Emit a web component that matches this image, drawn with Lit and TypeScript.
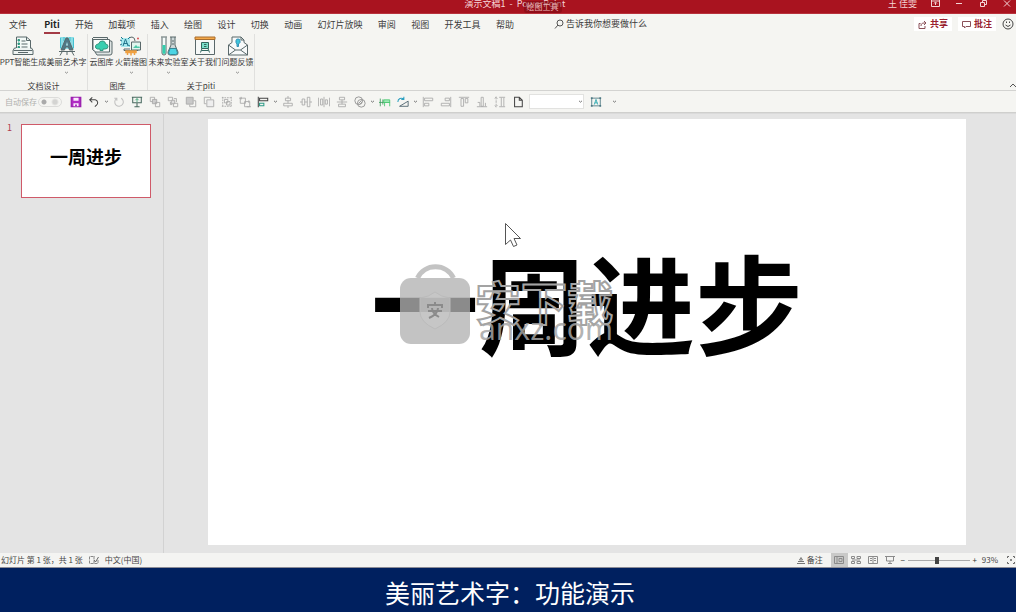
import { LitElement, html, svg, css, nothing, TemplateResult } from "lit";
import { customElement, property } from "lit/decorators.js";

type Shape = ReturnType<typeof svg>;

const icons: Record<string, Shape> = {
  save: svg`<path d="M1.500 1.500h11v11h-11z" fill="#b02bc4" stroke="#9a1fae" stroke-width="1.500"/><path d="M4 2h6v3.500H4zM4 8.500h6V12H4z" fill="#fbeafd" stroke="none"/><path d="M6 10h2v2H6z" fill="#9a1fae" stroke="none"/>`,
  undo: svg`<path d="M5 1.500L2 4.500l3 3M2.500 4.500h6a3.500 3.500 0 0 1 1 6.500L8 12.500" stroke="#444" stroke-width="1.200"/>`,
  redo: svg`<path d="M9.500 2.600A5 5 0 1 1 4 3M1.500 2.500h3v3" stroke="#c0c0c0" stroke-width="1.200"/>`,
  show: svg`<path d="M1 1.500h12M2 1.500v6.500h10V1.500M7 8v4.500M4 12.500h6" stroke="#48695f" stroke-width="1.200"/><path d="M7 3v4M5 5l2-2 2 2" stroke="#379e70"/>`,
  front: svg`<path d="M1.500 1.500h5v5h-5z"/><path d="M4 4h5v5H4z" fill="#ccc"/><path d="M7.500 7.500h5v5h-5z"/>`,
  back: svg`<path d="M1.500 1.500h5v4h-5zM7.500 8.500h5v4h-5z"/><path d="M4 7v3h2M8 3h3v4" /><path d="M5 5h4v4H5z" fill="#ddd"/>`,
  forward: svg`<path d="M1.500 1.500h8v8h-8z" fill="#c9c9c9"/><path d="M10 5.500h2.500v7h-7V10"/>`,
  backward: svg`<path d="M9 4V1.500H1.500V9H4"/><path d="M4.500 4.500h8v8h-8z" fill="#eee"/>`,
  group: svg`<path d="M2 1v12M12 1v12M1 2h12M1 12h12" stroke-dasharray="2 1"/><path d="M4 4h4v4H4zM6.500 6.500h4v4h-4z"/>`,
  ungroup: svg`<path d="M1.500 2.500h6v6h-6zM6.500 6.500h6v6h-6z"/><path d="M0 2.500h3M9 12.500h5M2.500 1v3M11.500 5v3" />`,
  left: svg`<path d="M1.500 1v12M3 2.500h9.500v3H3zM3 8.500h5v3H3z"/>`,
  leftDark: svg`<path d="M1.500 1v12M3 2.500h9.500v3H3z" stroke="#444" stroke-width="1.200"/><path d="M3 8.500h5v3H3z" stroke="#2d9b86" stroke-width="1.200"/>`,
  center: svg`<path d="M7 0v2.500M7 5.500v3M7 11.500V14M4 2.500h6v3H4zM2 8.500h10v3H2z"/>`,
  middle: svg`<path d="M0 7h2.500M5.500 7h3M11.500 7H14M2.500 3.500h3v7h-3zM8.500 1.500h3v11h-3z"/>`,
  distH: svg`<path d="M.5 2v10M13.500 2v10M3 3.500h2.500v7H3zM8.500 4.500H11v5H8.500zM7 1v12"/>`,
  distV: svg`<path d="M1 7h12M4 1.500h6v3H4zM3 9.500h8v3H3zM7 4.500v5"/>`,
  merge: svg`<circle cx="5.500" cy="5.500" r="4.500" stroke="#8c8c8c"/><circle cx="8.500" cy="8.500" r="4.500" stroke="#8c8c8c"/><path d="M5 9l4-4M6.500 10l3-3" stroke="#8c8c8c"/>`,
  green: svg`<path d="M1.500 3v9M4.500 4v6M0 7.500h13" stroke="#3d9c5d"/><path d="M5.500 4.500h7v3h-7zM12.500 8v4M6.500 8v4" stroke="#46c86d" fill="#a8ecbc"/>`,
  angle: svg`<path d="M3 12h10V6L3 12" stroke="#465c68"/><path d="M1 7c0-4 4-5.500 7-3.500M8 1v3H5" stroke="#2b9fc0" stroke-width="1.200"/>`,
  right: svg`<path d="M12.500 1v12M1.500 8.500H11v3H1.500zM6 2.500h5v3H6z"/>`,
  top: svg`<path d="M1 1.500h12M3.500 3h3v9h-3zM8.500 3h3v5h-3z"/>`,
  bottom: svg`<path d="M1 12.500h12M2 7.500h2.500V12M6 1.500h2.500V12H6zM11 8v4"/>`,
  height: svg`<path d="M2.500 1v12M1 3l1.500-2L4 3M1 11l1.500 2L4 11" stroke-dasharray="3 1"/><path d="M6 1.500h7M6 12.500h7M8.500 2v10M11.500 2v10"/>`,
  page: svg`<path d="M3 1.500h5.500L12 5v7.500H3zM8.500 1.500V5H12" stroke="#444" stroke-width="1.200"/>`,
  textbox: svg`<path d="M2 2.500h10v9H2z" stroke="#4c7782"/><path d="M5 10l2-6 2 6M5.600 8h3" stroke="#26a6ad"/><path d="M1 1.500h2v2H1zM11 1.500h2v2h-2zM1 10.500h2v2H1zM11 10.500h2v2h-2z" fill="#4c7782" stroke="none"/>`,
};

const art: Record<string, Shape> = {
  ppt: svg`<path d="M4.500 14V1h10l4 3.500V14z" fill="#f4faf8"/><path d="M14.500 1v3.500h4"/><path d="M9.500 5h4M9.500 8h6M9.500 11h6"/><path d="M6 3.500h1.500V5H6zM6 7h1.500v1.500H6zM6 10.500h1.500V12H6z" fill="#31bfa2" stroke="#31967f"/><path d="M4 12H2.500L1 14.500v4h20v-4L19.500 12H18M1.500 14.500h19" fill="#eef3f2"/><path d="M6 16.500h10"/>`,
  art: svg`<path d="M4 1h14v12H4z" fill="#8edee6" stroke="none"/><path d="M4.500 2v10M8 1v4M14 1v4M17.500 2v10" stroke="#45bfd0"/><path d="M10 2h2l5 12h-3.500l-1-3h-3l-1 3H5z" fill="#507987"/><path d="M10 9.500h2L11 6z" fill="#b9edf0" stroke="none"/><path d="M3 15.500h16M6 16l-2 3.500M16 16l2 3.500M11 16v3" />`,
  cloud: svg`<path d="M2 1.500h14.500v2M1.500 2v11.500l2 2" fill="#e8eceb"/><path d="M18.500 4.500l2.500 1V17q0 2-2 2H6l-2-3" fill="#dfe5e4"/><path d="M2 3.500h16.500v12.500H4.500L2 13.500z" fill="#fafdfc"/><path d="M6.500 13q-2.500-.5-2-3 .5-2 3-2 1-3.500 4.500-3 2.500.5 2.500 3 2.500 0 2.500 2.500T14 13h-2v1.500H9V13z" fill="#38ceb0" stroke="#36967f"/>`,
  rocket: svg`<path d="M8 3.500Q9 1 12 1q3 .5 3 4M10 13H4v1.500h14V13" /><path d="M1 2h9v9H1z" fill="#a5e9ee" stroke="none"/><path d="M5.500 3l2.500 7M5.500 3L3 10M3.500 7.500h4M0 4l2 1M1 1l2 2M10 1L8 3M0 9l2-1M10 10L8 9" stroke="#24758c"/><path d="M11.500 6h9v8h-9z" fill="#e1f6ee"/><path d="M13 12l3-3 2 2 1-1 1 2z" fill="#4ecaa9" stroke="none"/><path d="M6 15h10v1.500H6zM7.500 16.500V19M11 16.500v3M14.500 16.500V19" fill="#f1a33d" stroke="#f0a040" stroke-width="1.500"/><circle cx="18" cy="2.500" r="1" fill="#d95252" stroke="none"/>`,
  tubes: svg`<path d="M3 1h6M4 1.500V17q0 2 2 2t2-2V1.500" fill="#f5fbfa"/><path d="M4.500 9h3v8q-1.500 2-3 0z" fill="#34cfae" stroke="none"/><path d="M12 1h6M13 1v8l-3 7q-.5 3 2 3h6q2.500 0 2-3l-3-7V1" fill="#cdd7d8"/><path d="M12 12.500h6l1.500 4.500q-.5 1.500-2 1.500h-5q-1.500 0-2-1.500z" fill="#4cd4e4" stroke="#348797"/><path d="M14 5h2M14 8h2"/>`,
  about: svg`<path d="M1.500 1.500h19v17h-19z" fill="#f6f8f7"/><path d="M1 1h20v2.500H1z" fill="#f5a94a" stroke="#a86d2c"/><path d="M7.500 6.500h7v6h-7zM8 12.500l-1.500 4M14 12.500l1.500 4M7.500 14.500h7" fill="#7adfca" stroke="#32665f"/><path d="M10 8.500h2.500M10 10.500h2.500" stroke="#32665f"/>`,
  mail: svg`<path d="M1.500 9L5 6.500V1h9l3 3v2.500L20.500 9v10h-19z" fill="#f8fafa"/><path d="M1.500 9l7 5h5l7-5M1.500 19l7-5M20.500 19l-7-5M14 1v3h3"/><path d="M9 4.500q0-1.500 2-1.500t2 1.500v2l-1.500 1.500v2.500h-1.500V8L9 6.500z" fill="#3dc5dc" stroke="#338eb4"/>`,
};

function glyph(name: string): TemplateResult {
  return html`<svg class="glyph" viewBox="0 0 14 14" aria-hidden="true">${icons[name]}</svg>`;
}

const caret = html`<svg class="caret" viewBox="0 0 5 3" aria-hidden="true"><path d="M1 .8l1.500 1.400L4 .8" /></svg>`;

const shared = css`
  * { box-sizing: border-box; }
  button, input, select { font: inherit; color: inherit; border: 0; margin: 0; padding: 0; background: none; }
  svg { display: block; fill: none; flex: none; }
`;

@customElement("title-bar")
class TitleBar extends LitElement {
  static styles = [shared, css`
    :host { display: grid; grid-template-columns: 1fr auto 1fr; height: 14px; overflow: hidden; background: #a9131f; color: #f5d5d7; font-size: 9px; line-height: 8px; border-bottom: 1px solid #b8323c; }
    .doc { grid-column: 2; position: relative; white-space: nowrap; padding-left: 14px; }
    .tool { position: absolute; left: 73px; top: 1px; padding: 2px 3px; background: rgba(120, 8, 18, .5); font-size: 8px; line-height: 8px; color: #e9b2b6; border-radius: 3px; }
    .right { display: flex; justify-content: flex-end; gap: 12px; padding-right: 3px; }
    .user { white-space: nowrap; }
    .win { width: 12px; height: 8px; }
    .win svg { width: 12px; height: 8px; stroke: #f3d4d6; }
  `];
  render() {
    return html`
      <div class="doc">演示文稿1 &nbsp;- &nbsp;PowerPoint<span class="tool">绘图工具</span></div>
      <div class="right">
        <span class="user">王 佳雯</span>
        <button class="win" aria-label="功能区显示选项"><svg viewBox="0 0 12 8"><path d="M2.500-1v7.500h8V-1M2.500 1h8M6.500 5V2.500M5 3.500l1.500-1.500L8 3.500"/></svg></button>
        <button class="win" aria-label="最小化"><svg viewBox="0 0 12 8"><path d="M3 3.500h6"/></svg></button>
        <button class="win" aria-label="还原"><svg viewBox="0 0 12 8"><path d="M3.500 2.500h4v4h-4zM5.500 2V.5h4v4H8"/></svg></button>
        <button class="win" aria-label="关闭"><svg viewBox="0 0 12 8"><path d="M3 .5l6 6M9 .5l-6 6"/></svg></button>
      </div>`;
  }
}

@customElement("ribbon-tabs")
class RibbonTabs extends LitElement {
  static styles = [shared, css`
    :host { display: flex; align-items: center; height: 20px; padding-left: 9px; color: #3c3c3c; font-size: 9px; line-height: 12px; white-space: nowrap; }
    nav { display: flex; justify-content: space-between; width: 505px; }
    .tab { display: block; height: 17px; padding-top: 1px; margin-top: 3px; border-bottom: 2px solid transparent; }
    .tab.on { font-weight: 700; border-color: #a33a45; color: #222; margin-left: 2px; }
    .search { display: flex; align-items: center; gap: 2px; margin-left: 40px; }
    .search svg { width: 10px; height: 10px; stroke: #555; }
    .search input { width: 96px; height: 12px; outline: 0; }
    .search input::placeholder { color: #3c3c3c; opacity: 1; }
    .side { display: flex; align-items: center; gap: 6px; margin-left: auto; margin-right: 2px; }
    .chip { display: flex; align-items: center; gap: 3px; height: 14px; padding: 0 4px; background: #fff; color: #9a1f2f; font-weight: 700; }
    .chip svg { width: 9px; height: 9px; stroke: #8a5058; }
    .smile svg { width: 12px; height: 12px; stroke: #444; }
  `];
  tabs = ["文件", "Piti", "开始", "加载项", "插入", "绘图", "设计", "切换", "动画", "幻灯片放映", "审阅", "视图", "开发工具", "帮助"];
  render() {
    return html`
      <nav>${this.tabs.map((t) => html`<button class="tab ${t === "Piti" ? "on" : ""}">${t}</button>`)}</nav>
      <label class="search"><svg viewBox="0 0 10 10"><circle cx="6" cy="4" r="3"/><path d="M4 6L1 9.500"/></svg>
        <input placeholder="告诉我你想要做什么" aria-label="告诉我你想要做什么"></label>
      <div class="side">
        <button class="chip"><svg viewBox="0 0 9 9"><path d="M2.500 3.500h-1.500v5h6V6M3 6c0-2 1-3 3-3h2M6 1l2 2-2 2"/></svg>共享</button>
        <button class="chip"><svg viewBox="0 0 9 9"><path d="M.5 1.500h8v5H4L2.500 8V6.500h-2z"/></svg>批注</button>
        <button class="smile" aria-label="反馈"><svg viewBox="0 0 12 12"><circle cx="6" cy="6" r="5"/><path d="M3.500 7q2.500 3 5 0M4.500 3.500v1.500M7.500 3.500v1.500"/></svg></button>
      </div>`;
  }
}

interface Command { label: string; icon: string; width: number; menu?: boolean; }

@customElement("ribbon-panel")
class RibbonPanel extends LitElement {
  static styles = [shared, css`
    :host { display: flex; height: 57px; border-bottom: 1px solid #d3d3d1; color: #3a3a3a; font-size: 8px; line-height: 10px; }
    .group { display: flex; flex-direction: column; justify-content: space-between; border-right: 1px solid #e0e0de; padding-top: 2px; }
    .row { display: flex; }
    .cmd { display: flex; flex-direction: column; align-items: center; white-space: nowrap; }
    .cmd .pic { width: 22px; height: 20px; stroke: #59686a; margin-bottom: 1px; }
    .cmd span { display: flex; justify-content: center; width: 0; }
    .caret { width: 5px; height: 3px; stroke: #777; stroke-width: .8; margin-top: 4px; }
    .name { text-align: center; line-height: 8px; }
    .fold { align-self: flex-end; margin-left: auto; width: 7px; height: 9px; }
    .fold svg { width: 7px; height: 5px; stroke: #555; }
  `];
  groups: { name: string; items: Command[] }[] = [
    { name: "文档设计", items: [{ label: "PPT智能生成", icon: "ppt", width: 46 }, { label: "美丽艺术字", icon: "art", width: 41, menu: true }] },
    { name: "图库", items: [{ label: "云图库", icon: "cloud", width: 27 }, { label: "火箭搜图", icon: "rocket", width: 32, menu: true }] },
    { name: "关于piti", items: [{ label: "未来实验室", icon: "tubes", width: 41, menu: true }, { label: "关于我们", icon: "about", width: 32 }, { label: "问题反馈", icon: "mail", width: 33, menu: true }] },
  ];
  render() {
    return html`${this.groups.map((g) => html`
      <section class="group">
        <div class="row">${g.items.map((c) => html`
          <button class="cmd" style="width:${c.width}px">
            <svg class="pic" viewBox="0 0 22 20" aria-hidden="true">${art[c.icon]}</svg>
            <span>${c.label}</span>${c.menu ? caret : nothing}
          </button>`)}</div>
        <div class="name">${g.name}</div>
      </section>`)}
      <button class="fold" aria-label="折叠功能区"><svg viewBox="0 0 7 5"><path d="M1 4l3-3 3 3"/></svg></button>`;
  }
}

@customElement("quick-bar")
class QuickBar extends LitElement {
  static styles = [shared, css`
    :host { display: flex; align-items: center; height: 22px; padding-left: 5px; border-bottom: 1px solid #cfcfcd; font-size: 8px; line-height: 10px; color: #b0b0ae; }
    .auto { display: flex; align-items: center; justify-content: space-between; width: 62px; padding-right: 5px; white-space: nowrap; }
    .auto input { appearance: none; width: 24px; height: 10px; border: 1px solid #dcdcda; border-radius: 5px; background: radial-gradient(circle at 5px 4px, #aaa 2px, transparent 3px), radial-gradient(circle at 16px 4px, #d4d4d2 2px, transparent 4px); }
    .tool { display: flex; justify-content: center; width: 18px; }
    .glyph { width: 12px; height: 12px; stroke: #a8a8a8; stroke-width: 1; }
    .drop { display: flex; justify-content: center; width: 7px; }
    .caret { width: 5px; height: 3px; stroke: #777; }
    select { appearance: none; width: 55px; height: 15px; border: 1px solid #e2e2e0; background: #fff; }
    .combo { display: grid; align-items: center; margin: 0 3px 0 2px; }
    .combo > * { grid-area: 1 / 1; }
    .combo .caret { justify-self: end; margin-right: 1px; }
    .more { margin-left: 6px; }
  `];
  tools = ["save", "undo", "|", "redo", "show", "front", "back", "forward", "backward", "group", "ungroup", "leftDark", "|",
    "center", "middle", "distH", "distV", "merge", "|", "green", "angle", "|", "left", "right", "top", "bottom", "height", "page"];
  render() {
    return html`
      <label class="auto">自动保存<input type="checkbox"></label>
      ${this.tools.map((t) => t === "|"
        ? html`<button class="drop" aria-label="更多">${caret}</button>`
        : html`<button class="tool" aria-label=${t}>${glyph(t)}</button>`)}
      <label class="combo"><select aria-label="字体"><option></option></select>${caret}</label>
      <button class="tool" aria-label="文本框">${glyph("textbox")}</button>
      <button class="drop more" aria-label="自定义">${caret}</button>`;
  }
}

@customElement("water-mark")
class WaterMark extends LitElement {
  static styles = [shared, css`
    :host { display: flex; align-items: flex-start; gap: 5px; }
    .bag { width: 70px; height: 80px; }
    .words { display: flex; flex-direction: column; padding-top: 14px; color: rgba(165, 165, 165, .85); white-space: nowrap; }
    .cn { font-size: 46px; line-height: 44px; font-weight: 700; color: transparent; -webkit-text-stroke: 2px #a3a3a3; }
    .en { font: 30px/26px "Noto Sans", sans-serif; margin-top: -6px; padding-left: 4px; }
  `];
  render() {
    return html`
      <svg class="bag" viewBox="0 0 70 80" aria-hidden="true">
        <g opacity=".78"><path d="M17.500 14a20 20 0 0 1 36 0" stroke="#b3b3b3" stroke-width="5"/>
        <rect y="14" width="70" height="66" rx="11" fill="#b3b3b3"/></g>
        <path d="M35 28q6 5 15 6v14q0 10-15 17-15-7-15-17V34q9-1 15-6z" fill="#c8c8c8" fill-opacity=".7" stroke="#bbb"/>
        <path d="M35 38v3M28 44v-3h14v3M28 47h14M32 44q0 5 7 9M38 44q0 6-9 10" stroke="#8b8b8b" stroke-width="2"/>
      </svg>
      <div class="words"><span class="cn">安下载</span><span class="en">anxz.com</span></div>`;
  }
}

@customElement("slide-thumb")
class SlideThumb extends LitElement {
  @property({ type: Number }) index = 1;
  @property() text = "";
  static styles = [shared, css`
    :host { display: flex; color: #b03a4c; font-size: 9px; line-height: 8px; }
    .num { width: 14px; }
    .card { flex: 1; height: 74px; border: 1px solid #cf5a69; background: #fff; color: #000; font-size: 18px; line-height: 24px; font-weight: 700; padding-bottom: 10px; }
  `];
  render() {
    return html`<span class="num">${this.index}</span><button class="card">${this.text}</button>`;
  }
}

@customElement("status-bar")
class StatusBar extends LitElement {
  static styles = [shared, css`
    :host { display: flex; align-items: center; height: 15px; padding-left: 1px; background: #f4f4f2; color: #444; font-size: 8px; line-height: 10px; white-space: nowrap; overflow: hidden; border-bottom: 1px solid #8c8c96; }
    .spell { width: 10px; height: 10px; stroke: #888; margin: 0 6px; }
    .right { display: flex; align-items: center; margin-left: auto; }
    .notes { display: flex; align-items: center; gap: 2px; margin-right: 8px; }
    .notes svg { width: 8px; height: 8px; stroke: #777; }
    .view { display: flex; justify-content: center; align-items: center; width: 17px; height: 14px; }
    .view.on { background: #c9c9c8; }
    .view svg { width: 10px; height: 10px; stroke: #8b8b8b; }
    .step { width: 8px; color: #333; }
    .zoom { appearance: none; width: 62px; height: 10px; margin: 0 1px; background: linear-gradient(#aaa, #aaa) center / 100% 1px no-repeat; }
    .zoom::-webkit-slider-thumb { appearance: none; width: 4px; height: 7px; background: #444; }
    .pct { margin: 0 8px 0 3px; }
  `];
  render() {
    return html`
      <span>幻灯片 第 1 张，共 1 张</span>
      <svg class="spell" viewBox="0 0 10 10"><path d="M9 5v3.500H.5v-7H6M5 1.500v7" stroke-dasharray="3 1"/><path d="M5 5l1.500 2L9.500 2" stroke="#666"/></svg>
      <span>中文(中国)</span>
      <div class="right">
        <button class="notes"><svg viewBox="0 0 8 8"><path d="M0 7.500h8M1 5.500h6M2.500 4L4 1.500 5.500 4z"/></svg>备注</button>
        <button class="view on" aria-label="普通视图"><svg viewBox="0 0 10 10"><path d="M.5 1.500h9v7h-9zM3 1.500v7M5 3.500h3v3H5z"/></svg></button>
        <button class="view" aria-label="浏览"><svg viewBox="0 0 10 10"><path d="M.5 1.500h3v2h-3zM6 1.500h3.500v2H6zM.5 6.500h3v2h-3zM6 6.500h3.500v2H6zM1 5h8"/></svg></button>
        <button class="view" aria-label="阅读"><svg viewBox="0 0 10 10"><path d="M.5 1.500H5v7H.5zM5 1.500h4.500v7H5M2 3.500h2M2 5.500h2M6 3.500h2M6 5.500h2"/></svg></button>
        <button class="view" aria-label="放映"><svg viewBox="0 0 10 10"><path d="M0 1.500h10M1.500 1.500v4.500h7V1.500M5 6v3M3 8.500h4"/></svg></button>
        <button class="step" aria-label="缩小">−</button>
        <input class="zoom" type="range" min="10" max="190" value="96" aria-label="显示比例">
        <button class="step" aria-label="放大">+</button>
        <span class="pct">93%</span>
        <button aria-label="适应窗口"><svg width="10" height="10" viewBox="0 0 10 10" stroke="#666"><path d="M3 1.500H1.500V3M7 1.500h1.500V3M1.500 7v1.500H3M8.500 7v1.500H7M4 5h2M5 4v2"/></svg></button>
      </div>`;
  }
}

@customElement("app-root")
class AppRoot extends LitElement {
  static styles = [shared, css`
    :host { display: flex; flex-direction: column; min-height: 100vh; background: #f5f5f2; font-family: "Noto Sans CJK SC", "Noto Sans", sans-serif; }
    .work { flex: 1; display: flex; background: #e4e4e4; border-top: 1px solid #dadada; }
    .panel { width: 164px; padding: 10px 12px 0 7px; border-right: 1px solid #d2d2d2; }
    .stage { flex: 1; display: flex; padding: 5px 50px 8px 44px; }
    .slide { flex: 1; position: relative; display: flex; align-items: center; justify-content: center; padding-bottom: 64px; background: #fff; }
    h1 { margin: 0; font-size: 108px; line-height: 120px; font-weight: 700; color: #000; white-space: nowrap; }
    water-mark { position: absolute; left: 192px; top: 145px; }
    .pointer { position: absolute; left: 296px; top: 103px; width: 18px; height: 27px; stroke: #555; fill: #fff; }
    .caption { display: flex; align-items: center; justify-content: center; height: 44px; padding: 4px 0 0 4px; background: #00205f; color: #fff; font-size: 25px; line-height: 32px; }
  `];
  render() {
    return html`
      <title-bar></title-bar>
      <ribbon-tabs></ribbon-tabs>
      <ribbon-panel></ribbon-panel>
      <quick-bar></quick-bar>
      <main class="work">
        <aside class="panel"><slide-thumb .index=${1} text="一周进步"></slide-thumb></aside>
        <section class="stage">
          <div class="slide">
            <h1>一周进步</h1>
            <water-mark></water-mark>
            <svg class="pointer" viewBox="0 0 18 27"><path d="M1.500 1.500v21l5-4.500 3 6.500 3.500-1.500-3-6.500h6.500z"/></svg>
          </div>
        </section>
      </main>
      <status-bar></status-bar>
      <div class="caption">美丽艺术字：功能演示</div>`;
  }
}
